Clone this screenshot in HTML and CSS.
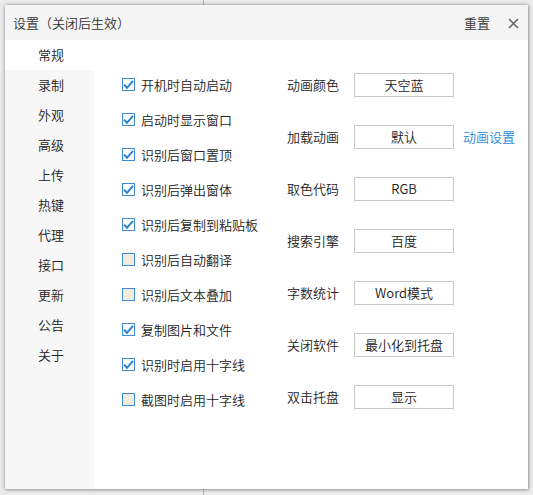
FILE: index.html
```html
<!DOCTYPE html>
<html lang="zh-CN">
<head>
<meta charset="utf-8">
<title>设置</title>
<link rel="stylesheet" href="styles.css">
</head>
<body>
<div class="dialog">
  <div class="titlebar">
    <span class="title">设置（关闭后生效）</span>
    <span class="reset">重置</span>
    <span class="close"><svg width="11" height="11" viewBox="0 0 11 11"><path d="M1 1L10 10M10 1L1 10" stroke="#6a6a6a" stroke-width="1.7" fill="none"/></svg></span>
  </div>
  <div class="main">
    <ul class="sidebar">
      <li class="active">常规</li>
      <li>录制</li>
      <li>外观</li>
      <li>高级</li>
      <li>上传</li>
      <li>热键</li>
      <li>代理</li>
      <li>接口</li>
      <li>更新</li>
      <li>公告</li>
      <li>关于</li>
    </ul>
    <div class="content">
      <div class="checks">
        <label class="check"><span class="box on"><svg width="13" height="13" viewBox="0 0 13 13"><path d="M2 6.6L5 9.8L11 2.8" stroke="#2c7fd2" stroke-width="2" fill="none"/></svg></span>开机时自动启动</label>
        <label class="check"><span class="box on"><svg width="13" height="13" viewBox="0 0 13 13"><path d="M2 6.6L5 9.8L11 2.8" stroke="#2c7fd2" stroke-width="2" fill="none"/></svg></span>启动时显示窗口</label>
        <label class="check"><span class="box on"><svg width="13" height="13" viewBox="0 0 13 13"><path d="M2 6.6L5 9.8L11 2.8" stroke="#2c7fd2" stroke-width="2" fill="none"/></svg></span>识别后窗口置顶</label>
        <label class="check"><span class="box on"><svg width="13" height="13" viewBox="0 0 13 13"><path d="M2 6.6L5 9.8L11 2.8" stroke="#2c7fd2" stroke-width="2" fill="none"/></svg></span>识别后弹出窗体</label>
        <label class="check"><span class="box on"><svg width="13" height="13" viewBox="0 0 13 13"><path d="M2 6.6L5 9.8L11 2.8" stroke="#2c7fd2" stroke-width="2" fill="none"/></svg></span>识别后复制到粘贴板</label>
        <label class="check"><span class="box off"></span>识别后自动翻译</label>
        <label class="check"><span class="box off"></span>识别后文本叠加</label>
        <label class="check"><span class="box on"><svg width="13" height="13" viewBox="0 0 13 13"><path d="M2 6.6L5 9.8L11 2.8" stroke="#2c7fd2" stroke-width="2" fill="none"/></svg></span>复制图片和文件</label>
        <label class="check"><span class="box on"><svg width="13" height="13" viewBox="0 0 13 13"><path d="M2 6.6L5 9.8L11 2.8" stroke="#2c7fd2" stroke-width="2" fill="none"/></svg></span>识别时启用十字线</label>
        <label class="check"><span class="box off"></span>截图时启用十字线</label>
      </div>
      <div class="options">
        <div class="opt"><span class="opt-label">动画颜色</span><span class="select">天空蓝</span></div>
        <div class="opt"><span class="opt-label">加载动画</span><span class="select">默认</span><a class="link">动画设置</a></div>
        <div class="opt"><span class="opt-label">取色代码</span><span class="select">RGB</span></div>
        <div class="opt"><span class="opt-label">搜索引擎</span><span class="select">百度</span></div>
        <div class="opt"><span class="opt-label">字数统计</span><span class="select">Word模式</span></div>
        <div class="opt"><span class="opt-label">关闭软件</span><span class="select">最小化到托盘</span></div>
        <div class="opt"><span class="opt-label">双击托盘</span><span class="select">显示</span></div>
      </div>
    </div>
  </div>
</div>
</body>
</html>
```

FILE: styles.css
```css
* { box-sizing: border-box; }
html, body { margin: 0; padding: 0; }
body {
  width: 533px;
  height: 495px;
  background: #ececec linear-gradient(to right, transparent 203px, #b4b4b4 203px, #b4b4b4 204px, transparent 204px);
  font-family: "Noto Sans CJK SC", "Microsoft YaHei", sans-serif;
  font-size: 13px;
  font-weight: 350;
  color: #222;
  padding: 5px 0 0 5px;
}
.dialog {
  width: 523px;
  height: 484px;
  background: #fff;
  box-shadow: 0 0 4px rgba(0,0,0,0.35), 1px 1px 3px rgba(0,0,0,0.2);
  display: flex;
  flex-direction: column;
}
.titlebar {
  height: 35px;
  flex: none;
  background: #f5f5f5;
  display: flex;
  align-items: center;
  padding: 0 9px 0 8px;
  line-height: 18px;
}
.title { flex: 1; color: #333; }
.reset { color: #333; margin-right: 18px; }
.close { display: flex; width: 11px; height: 11px; margin-top: 1px; }
.main {
  flex: 1;
  display: flex;
}
.sidebar {
  list-style: none;
  margin: 0;
  padding: 0;
  width: 89px;
  flex: none;
  background: #f7f7f7;
}
.sidebar li {
  height: 30px;
  line-height: 30px;
  padding-left: 33px;
}
.sidebar li.active { background: #fff; }
.content {
  flex: 1;
  display: flex;
  padding-left: 28px;
}
.checks {
  width: 165px;
  padding-top: 27px;
  display: flex;
  flex-direction: column;
}
.check {
  height: 35px;
  display: flex;
  align-items: center;
  line-height: 18px;
}
.box {
  width: 13px;
  height: 13px;
  border: 1px solid #3d8ad6;
  margin-right: 6px;
  display: flex;
  align-items: center;
  justify-content: center;
  flex: none;
}
.box svg { display: block; margin: -1px; }
.box.on { background: #fff; }
.box.off { background: #f3ebdb; }
.options {
  padding-top: 33px;
  display: flex;
  flex-direction: column;
  gap: 28px;
}
.opt {
  height: 24px;
  display: flex;
  align-items: center;
  line-height: 18px;
}
.opt-label { width: 67px; }
.select {
  width: 100px;
  height: 24px;
  border: 1px solid #c6c6c6;
  display: flex;
  align-items: center;
  justify-content: center;
}
.link {
  margin-left: 9px;
  color: #2a88d8;
}
```
